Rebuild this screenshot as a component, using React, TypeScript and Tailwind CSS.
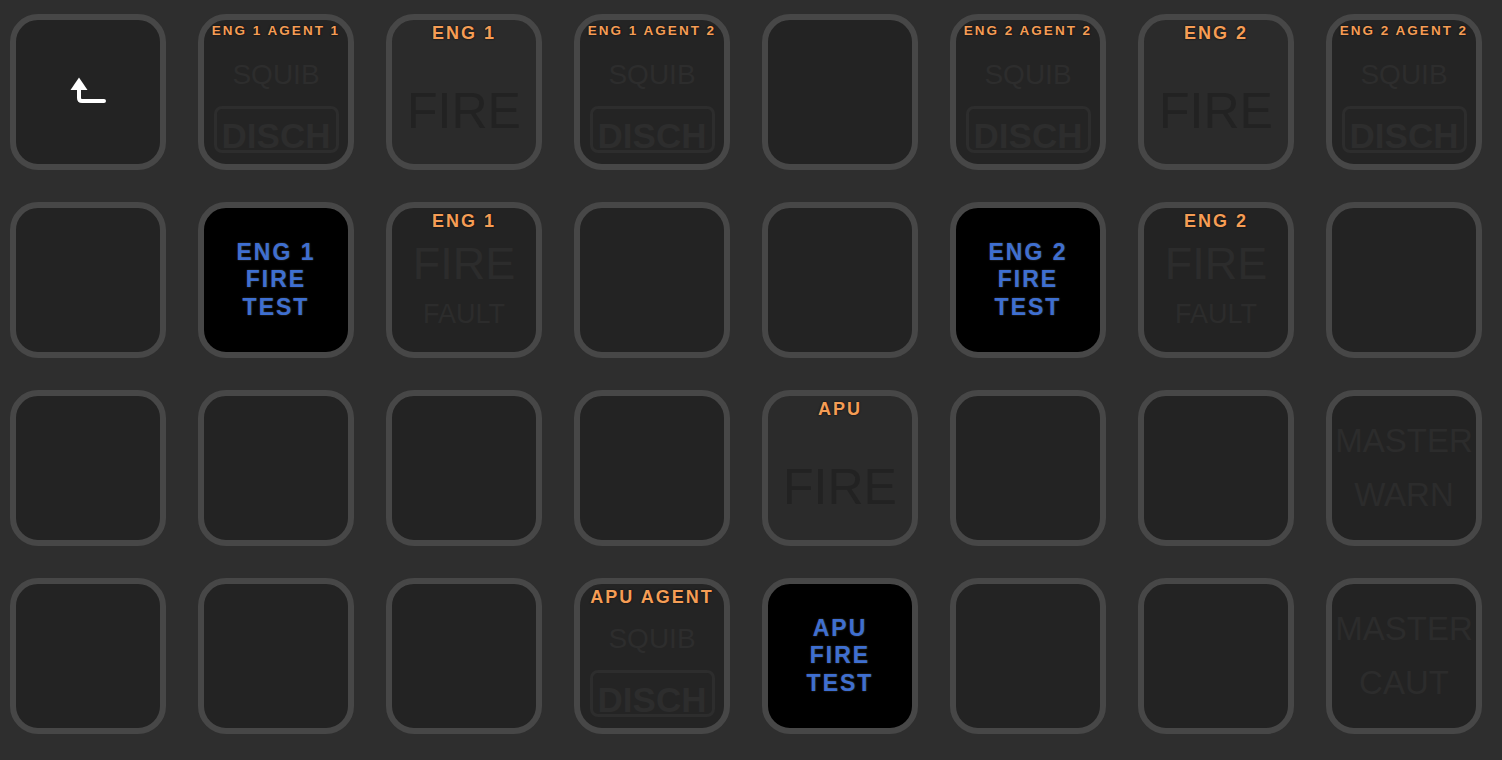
import { ReactNode } from "react";

type Celda =
    | { tipo: "vacio" }
    | { tipo: "volver" }
    | { tipo: "squib"; titulo: string }
    | { tipo: "fuego"; titulo: string }
    | { tipo: "falla"; titulo: string }
    | { tipo: "prueba"; lineas: string[] }
    | { tipo: "master"; linea: string };

const FILAS: Celda[][] = [
    [
        { tipo: "volver" },
        { tipo: "squib", titulo: "ENG 1 AGENT 1" },
        { tipo: "fuego", titulo: "ENG 1" },
        { tipo: "squib", titulo: "ENG 1 AGENT 2" },
        { tipo: "vacio" },
        { tipo: "squib", titulo: "ENG 2 AGENT 2" },
        { tipo: "fuego", titulo: "ENG 2" },
        { tipo: "squib", titulo: "ENG 2 AGENT 2" },
    ],
    [
        { tipo: "vacio" },
        { tipo: "prueba", lineas: ["ENG 1", "FIRE", "TEST"] },
        { tipo: "falla", titulo: "ENG 1" },
        { tipo: "vacio" },
        { tipo: "vacio" },
        { tipo: "prueba", lineas: ["ENG 2", "FIRE", "TEST"] },
        { tipo: "falla", titulo: "ENG 2" },
        { tipo: "vacio" },
    ],
    [
        { tipo: "vacio" },
        { tipo: "vacio" },
        { tipo: "vacio" },
        { tipo: "vacio" },
        { tipo: "fuego", titulo: "APU" },
        { tipo: "vacio" },
        { tipo: "vacio" },
        { tipo: "master", linea: "WARN" },
    ],
    [
        { tipo: "vacio" },
        { tipo: "vacio" },
        { tipo: "vacio" },
        { tipo: "squib", titulo: "APU AGENT" },
        { tipo: "prueba", lineas: ["APU", "FIRE", "TEST"] },
        { tipo: "vacio" },
        { tipo: "vacio" },
        { tipo: "master", linea: "CAUT" },
    ],
];

// Título naranja arriba de la tecla
function Titulo({ texto }: { texto: string }) {
    const largo = texto.length > 10;
    return (
        <div className="h-[26px] pt-[4px] w-full flex justify-center shrink-0">
            <span
                className={`font-bold leading-none text-[#f59d55] tracking-[2px] whitespace-nowrap [text-shadow:0_0_2px_#111,0_0_1px_#111] ${
                    largo ? "text-[13.5px]" : "text-[18px]"
                }`}
            >
                {texto}
            </span>
        </div>
    );
}

function Tecla({ oscura = false, fondo = "bg-[#232323]", children }: { oscura?: boolean; fondo?: string; children?: ReactNode }) {
    return (
        <div
            className={`w-[156px] h-[156px] rounded-[28px] border-[6px] border-[#474747] overflow-hidden flex flex-col items-center ${
                oscura ? "bg-black" : fondo
            }`}
        >
            {children}
        </div>
    );
}

function IconoVolver() {
    return (
        <svg width="36" height="27" viewBox="0 0 36 27" fill="none">
            <path d="M0.5 13 L9 0.5 L17.5 13 Z" fill="white" />
            <path d="M9 11 V21 Q9 24 12 24 H34" stroke="white" strokeWidth="4" strokeLinecap="round" />
        </svg>
    );
}

function Contenido({ celda }: { celda: Celda }) {
    switch (celda.tipo) {
        case "vacio":
            return <Tecla />;
        case "volver":
            return (
                <Tecla>
                    <div className="flex-1 flex items-center justify-center pb-[3px]">
                        <IconoVolver />
                    </div>
                </Tecla>
            );
        case "squib":
            return (
                <Tecla fondo="bg-[#242424]">
                    <Titulo texto={celda.titulo} />
                    <div className="mt-[15px] text-[28px] leading-none text-[#2d2d2d]">SQUIB</div>
                    <div className="mt-[17px] w-[125px] h-[47px] border-[3px] border-[#2d2d2d] rounded-[8px] flex justify-center pt-[9px]">
                        <span className="text-[35px] font-bold leading-none text-[#2d2d2d]">DISCH</span>
                    </div>
                </Tecla>
            );
        case "fuego":
            return (
                <Tecla fondo="bg-[#2b2b2b]">
                    <Titulo texto={celda.titulo} />
                    <div className="mt-[40px] text-[50px] leading-none text-[#222222]">FIRE</div>
                </Tecla>
            );
        case "falla":
            return (
                <Tecla>
                    <Titulo texto={celda.titulo} />
                    <div className="mt-[7px] text-[45px] leading-none text-[#2c2c2c]">FIRE</div>
                    <div className="mt-[15px] text-[27px] leading-none text-[#2c2c2c]">FAULT</div>
                </Tecla>
            );
        case "prueba":
            return (
                <Tecla oscura>
                    <div className="flex-1 flex flex-col items-center justify-center">
                        {celda.lineas.map((l) => (
                            <span
                                key={l}
                                className="text-[23px] font-bold leading-[27.5px] tracking-[2px] text-[#3e6fd0] [text-shadow:0_0_2px_#333,0_0_1px_#333]"
                            >
                                {l}
                            </span>
                        ))}
                    </div>
                </Tecla>
            );
        case "master":
            return (
                <Tecla>
                    <div className="flex-1 flex flex-col items-center justify-center text-[33px] leading-[54px] text-[#2c2c2c] whitespace-nowrap">
                        <span>MASTER</span>
                        <span>{celda.linea}</span>
                    </div>
                </Tecla>
            );
    }
}

export default function App() {
    return (
        <div className="min-h-screen w-full bg-[#2e2e2e] font-['Liberation_Sans',Arial,sans-serif] select-none">
            <div className="grid grid-cols-[repeat(8,156px)] gap-[32px] pl-[10px] pt-[14px]">
                {FILAS.flat().map((celda, i) => (
                    <Contenido key={i} celda={celda} />
                ))}
            </div>
        </div>
    );
}
